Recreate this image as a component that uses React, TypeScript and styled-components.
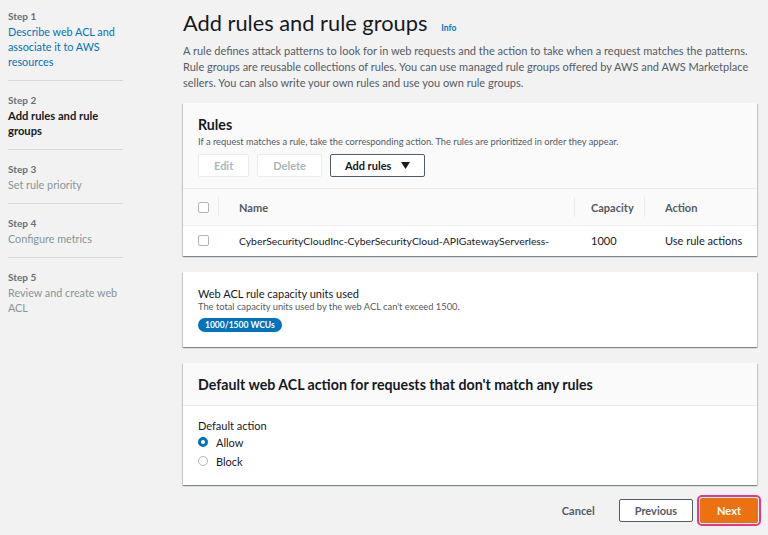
import React from "react";
import styled, { createGlobalStyle } from "styled-components";

const GlobalStyle = createGlobalStyle`
  body {
    margin: 0;
    background: #f2f2f2;
    font-family: "Lato", "Liberation Sans", sans-serif;
    color: #16191f;
  }
`;

const Page = styled.div`
  display: flex;
  width: 768px;
  height: 535px;
  overflow: hidden;
`;

const Sidebar = styled.nav`
  width: 183px;
  flex-shrink: 0;
  padding: 10px 0 0 8px;
  box-sizing: border-box;
`;

const StepList = styled.ol`
  list-style: none;
  margin: 0;
  padding: 0;
  width: 115px;
`;

const StepItem = styled.li`
  padding: 0 0 11px;
  margin-bottom: 13px;
  border-bottom: 1px solid #d5dbdb;

  &:last-child {
    border-bottom: none;
  }
`;

const StepLabel = styled.div`
  font-size: 10px;
  font-weight: 700;
  line-height: 13px;
  color: #687078;
  margin-bottom: 1px;
`;

const StepTitle = styled.div<{ state: "link" | "active" | "disabled" }>`
  font-size: ${(p) => (p.state === "active" ? "11.2px" : "10.8px")};
  line-height: 15px;
  font-weight: ${(p) => (p.state === "active" ? 700 : 400)};
  color: ${(p) =>
    p.state === "link" ? "#0073bb" : p.state === "active" ? "#16191f" : "#879596"};
`;

const Main = styled.main`
  flex: 1;
  padding: 8px 11px 0 0;
  display: flex;
  flex-direction: column;
`;

const HeadingRow = styled.div`
  display: flex;
  align-items: baseline;
  gap: 14px;
`;

const Heading = styled.h1`
  margin: 0;
  font-size: 21.8px;
  font-weight: 400;
  line-height: 30px;
`;

const InfoLink = styled.span`
  font-size: 8.5px;
  font-weight: 700;
  color: #0073bb;
`;

const Intro = styled.p`
  margin: 5px 0 12px;
  font-size: 11px;
  line-height: 16px;
  color: #545b64;
`;

const Panel = styled.section`
  background: #fff;
  box-shadow: 0 1px 1px 0 rgba(0, 28, 36, 0.3), 1px 1px 1px 0 rgba(0, 28, 36, 0.15),
    -1px 1px 1px 0 rgba(0, 28, 36, 0.15);
  margin-bottom: 16px;
`;

const PanelHeader = styled.div<{ bordered?: boolean }>`
  background: #fafafa;
  padding: 13px 15px 11px;
  border-bottom: ${(p) => (p.bordered ? "1px solid #eaeded" : "none")};
`;

const PanelTitle = styled.h2`
  margin: 0;
  font-size: 14.2px;
  font-weight: 700;
  line-height: 18px;
`;

const PanelSub = styled.div`
  margin-top: 2px;
  font-size: 9.3px;
  line-height: 12px;
  color: #545b64;
`;

const Toolbar = styled.div`
  display: flex;
  gap: 8px;
  margin-top: 6px;
`;

const Button = styled.button<{ disabled?: boolean }>`
  display: flex;
  align-items: center;
  gap: 10px;
  height: 23px;
  padding: 0 ${(p) => (p.disabled ? "15px" : "14px")};
  background: #fff;
  border: 1px solid ${(p) => (p.disabled ? "#eaeded" : "#545b64")};
  border-radius: 2px;
  font-family: inherit;
  font-size: 11px;
  font-weight: 700;
  color: ${(p) => (p.disabled ? "#aab7b8" : "#16191f")};
`;

const Table = styled.table`
  width: 100%;
  border-collapse: collapse;
  table-layout: fixed;
`;

const HeadCell = styled.th<{ width?: number; pad?: number; sep?: boolean }>`
  position: relative;
  box-sizing: border-box;
  width: ${(p) => (p.width ? `${p.width}px` : "auto")};
  height: 37px;
  padding: 0 0 0 ${(p) => p.pad ?? 20}px;
  background: #fafafa;
  border-top: 1px solid #eaeded;
  text-align: left;
  font-size: 11px;
  font-weight: 700;
  color: #545b64;

  &::after {
    content: "";
    display: ${(p) => (p.sep ? "block" : "none")};
    position: absolute;
    right: 0;
    top: 8px;
    bottom: 8px;
    width: 1px;
    background: #eaeded;
  }
`;

const Cell = styled.td<{ pad?: number }>`
  box-sizing: border-box;
  height: 30px;
  padding: 0 0 0 ${(p) => p.pad ?? 20}px;
  border-top: 1px solid #eaeded;
  font-size: 11px;
  color: #16191f;
  white-space: nowrap;
  overflow: hidden;
`;

const NameText = styled.span`
  font-size: 10.4px;
`;

const Checkbox = styled.span`
  display: block;
  width: 9px;
  height: 9px;
  border: 1px solid #aab7b8;
  border-radius: 2px;
  background: #fff;
`;

const PanelBody = styled.div`
  padding: 15px 15px 15px;
`;

const FieldLabel = styled.div`
  font-size: 11px;
  line-height: 14px;
  color: #16191f;
`;

const FieldHint = styled.div`
  font-size: 9.3px;
  line-height: 12px;
  color: #545b64;
`;

const Badge = styled.span`
  display: block;
  width: fit-content;
  margin-top: 5px;
  padding: 0 7px;
  height: 14px;
  line-height: 14px;
  border-radius: 8px;
  background: #0073bb;
  color: #fff;
  font-size: 8.5px;
  font-weight: 700;
`;

const DefaultBody = styled.div`
  padding: 13px 15px 14px;
`;

const RadioRow = styled.label`
  display: flex;
  align-items: center;
  gap: 8px;
  height: 19px;
  font-size: 11px;
  color: #16191f;
`;

const Radio = styled.span<{ checked?: boolean }>`
  box-sizing: border-box;
  width: 10px;
  height: 10px;
  border-radius: 50%;
  background: #fff;
  border: ${(p) => (p.checked ? "3px solid #0073bb" : "1px solid #aab7b8")};
`;

const Footer = styled.div`
  display: flex;
  justify-content: flex-end;
  align-items: center;
  margin-top: -3px;
  margin-right: -1px;
`;

const TextButton = styled.button`
  padding: 0;
  background: none;
  border: none;
  font-family: inherit;
  font-size: 11px;
  font-weight: 700;
  color: #545b64;
  margin-right: 24px;
`;

const FooterButton = styled.button<{ primary?: boolean }>`
  height: ${(p) => (p.primary ? "25px" : "23px")};
  padding: 0 ${(p) => (p.primary ? "16px" : "15px")};
  margin-left: ${(p) => (p.primary ? "7px" : "0")};
  border-radius: 2px;
  border: 1px solid ${(p) => (p.primary ? "#ec7211" : "#545b64")};
  background: ${(p) => (p.primary ? "#ec7211" : "#fff")};
  color: ${(p) => (p.primary ? "#fff" : "#545b64")};
  font-family: inherit;
  font-size: 11px;
  font-weight: 700;
  outline: ${(p) => (p.primary ? "2px solid #e8378a" : "none")};
  outline-offset: 1px;
`;

const Caret = () => (
  <svg width="9" height="7" viewBox="0 0 9 7">
    <path d="M0 0h9L4.5 7z" fill="#16191f" />
  </svg>
);

const steps: { label: string; title: string; state: "link" | "active" | "disabled" }[] = [
  { label: "Step 1", title: "Describe web ACL and associate it to AWS resources", state: "link" },
  { label: "Step 2", title: "Add rules and rule groups", state: "active" },
  { label: "Step 3", title: "Set rule priority", state: "disabled" },
  { label: "Step 4", title: "Configure metrics", state: "disabled" },
  { label: "Step 5", title: "Review and create web ACL", state: "disabled" },
];

export default function App() {
  return (
    <Page>
      <GlobalStyle />
      <Sidebar>
        <StepList>
          {steps.map((s) => (
            <StepItem key={s.label}>
              <StepLabel>{s.label}</StepLabel>
              <StepTitle state={s.state}>{s.title}</StepTitle>
            </StepItem>
          ))}
        </StepList>
      </Sidebar>

      <Main>
        <HeadingRow>
          <Heading>Add rules and rule groups</Heading>
          <InfoLink>Info</InfoLink>
        </HeadingRow>
        <Intro>
          A rule defines attack patterns to look for in web requests and the action to take when a
          request matches the patterns. Rule groups are reusable collections of rules. You can use
          managed rule groups offered by AWS and AWS Marketplace sellers. You can also write your own
          rules and use you own rule groups.
        </Intro>

        <Panel>
          <PanelHeader>
            <PanelTitle>Rules</PanelTitle>
            <PanelSub>
              If a request matches a rule, take the corresponding action. The rules are prioritized in
              order they appear.
            </PanelSub>
            <Toolbar>
              <Button disabled>Edit</Button>
              <Button disabled>Delete</Button>
              <Button>
                Add rules <Caret />
              </Button>
            </Toolbar>
          </PanelHeader>
          <Table>
            <thead>
              <tr>
                <HeadCell width={36} pad={15} sep>
                  <Checkbox />
                </HeadCell>
                <HeadCell sep>Name</HeadCell>
                <HeadCell width={70} pad={16} sep>
                  Capacity
                </HeadCell>
                <HeadCell width={112}>Action</HeadCell>
              </tr>
            </thead>
            <tbody>
              <tr>
                <Cell pad={15}>
                  <Checkbox />
                </Cell>
                <Cell>
                  <NameText>CyberSecurityCloudInc-CyberSecurityCloud-APIGatewayServerless-</NameText>
                </Cell>
                <Cell pad={16}>1000</Cell>
                <Cell>Use rule actions</Cell>
              </tr>
            </tbody>
          </Table>
        </Panel>

        <Panel>
          <PanelBody>
            <FieldLabel>Web ACL rule capacity units used</FieldLabel>
            <FieldHint>The total capacity units used by the web ACL can't exceed 1500.</FieldHint>
            <Badge>1000/1500 WCUs</Badge>
          </PanelBody>
        </Panel>

        <Panel>
          <PanelHeader bordered>
            <PanelTitle>Default web ACL action for requests that don't match any rules</PanelTitle>
          </PanelHeader>
          <DefaultBody>
            <FieldLabel>Default action</FieldLabel>
            <RadioRow>
              <Radio checked />
              Allow
            </RadioRow>
            <RadioRow>
              <Radio />
              Block
            </RadioRow>
          </DefaultBody>
        </Panel>

        <Footer>
          <TextButton>Cancel</TextButton>
          <FooterButton>Previous</FooterButton>
          <FooterButton primary>Next</FooterButton>
        </Footer>
      </Main>
    </Page>
  );
}
